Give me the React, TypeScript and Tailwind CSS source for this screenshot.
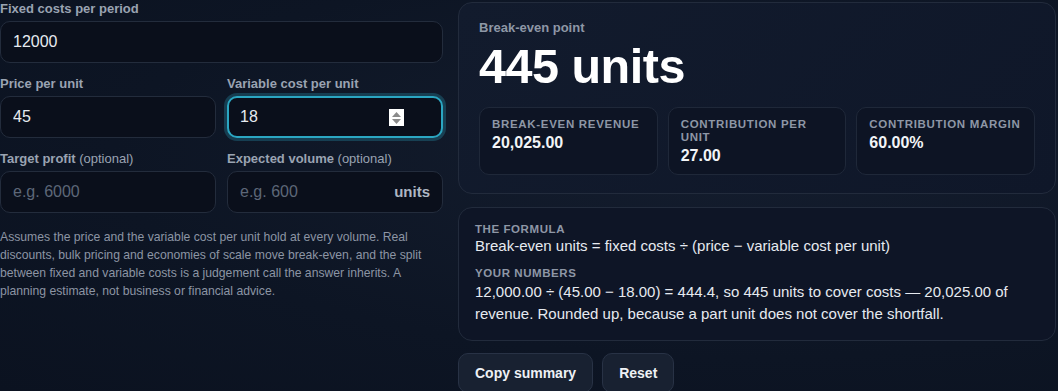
import React from "react";

const font = { fontFamily: '"Liberation Sans", Arial, sans-serif' };

function Field({
  label,
  optional,
  value,
  placeholder,
  suffix,
  focused,
}: {
  label: string;
  optional?: boolean;
  value?: string;
  placeholder?: string;
  suffix?: string;
  focused?: boolean;
}) {
  return (
    <label className="flex flex-col gap-[4px]">
      <span className="text-[13px] leading-[16px] font-bold text-[#9aa3b2]">
        {label}
        {optional && <span className="font-normal"> (optional)</span>}
      </span>
      <div
        className={
          focused
            ? "relative flex h-[42px] items-center rounded-[10px] border-2 border-[#2ba6c2] bg-[#0a0f1b] shadow-[0_0_0_3px_rgba(43,166,194,0.28)]"
            : "relative flex h-[42px] items-center rounded-[10px] border border-[#232c3c] bg-[#0a0f1b]"
        }
      >
        <input
          readOnly
          value={value ?? ""}
          placeholder={placeholder}
          className={
            focused
              ? "w-full bg-transparent pl-[11px] pr-3 text-[16px] text-[#e7ebf1] placeholder:text-[#5d6778] outline-none"
              : "w-full bg-transparent pl-3 pr-3 text-[16px] text-[#e7ebf1] placeholder:text-[#5d6778] outline-none"
          }
        />
        {focused && (
          <span className="absolute right-[37px] top-[11px] flex h-[17px] w-[15px] flex-col items-center justify-center gap-[2px] bg-white">
            <svg width="9" height="5" viewBox="0 0 9 5">
              <path d="M4.5 0L9 5H0z" fill="#8a8a8a" />
            </svg>
            <svg width="9" height="5" viewBox="0 0 9 5">
              <path d="M0 0h9L4.5 5z" fill="#8a8a8a" />
            </svg>
          </span>
        )}
        {suffix && (
          <span className="pr-3 text-[15px] font-bold text-[#aeb6c3]">{suffix}</span>
        )}
      </div>
    </label>
  );
}

function Stat({ label, value }: { label: string; value: string }) {
  return (
    <div className="rounded-[10px] border border-[#1f2839] bg-[#0d1424] px-3 pt-[10px] pb-3 h-[68px]">
      <div className="text-[11.5px] leading-[13px] tracking-[0.06em] uppercase font-bold text-[#8e97a6]">
        {label}
      </div>
      <div className="mt-[2px] text-[16px] leading-[20px] font-bold text-[#f2f4f7]">{value}</div>
    </div>
  );
}

export default function App() {
  return (
    <div
      className="min-h-[391px] w-[1058px] overflow-hidden bg-[radial-gradient(ellipse_at_70%_40%,#141d2e_0%,#0d1524_60%,#0b1220_100%)]"
      style={font}
    >
      <div className="grid grid-cols-[443px_598px] gap-[15px] pt-[2px]">
        {/* Inputs */}
        <div className="flex flex-col">
          <div className="-mt-[1px]">
            <Field label="Fixed costs per period" value="12000" />
          </div>
          <div className="mt-[13px] grid grid-cols-2 gap-[11px]">
            <Field label="Price per unit" value="45" />
            <Field label="Variable cost per unit" value="18" focused />
          </div>
          <div className="mt-[13px] grid grid-cols-2 gap-[11px]">
            <Field label="Target profit" optional placeholder="e.g. 6000" />
            <Field label="Expected volume" optional placeholder="e.g. 600" suffix="units" />
          </div>
          <p className="mt-[15px] text-[12.2px] leading-[18px] text-[#8c95a4]">
            Assumes the price and the variable cost per unit hold at every volume. Real discounts,
            bulk pricing and economies of scale move break-even, and the split between fixed and
            variable costs is a judgement call the answer inherits. A planning estimate, not
            business or financial advice.
          </p>
        </div>

        {/* Results */}
        <div className="flex flex-col">
          <div className="rounded-[14px] border border-[#222b3c] bg-[linear-gradient(135deg,#121b2d,#0f1729)] px-5 pt-[15px] pb-[18px]">
            <div className="text-[13px] leading-[20px] font-bold text-[#8e97a6]">Break-even point</div>
            <div className="mt-[2px] text-[48.5px] leading-[52px] font-bold text-white tracking-[-0.01em]">
              445 units
            </div>
            <div className="mt-[15px] grid grid-cols-3 gap-[10px]">
              <Stat label="Break-even revenue" value="20,025.00" />
              <Stat label="Contribution per unit" value="27.00" />
              <Stat label="Contribution margin" value="60.00%" />
            </div>
          </div>

          <div className="mt-[13px] rounded-[14px] border border-[#222b3c] bg-[#0e1526] px-4 pt-[14px] pb-[15px]">
            <div className="text-[11.5px] leading-[14px] tracking-[0.05em] font-bold uppercase text-[#8e97a6]">
              The formula
            </div>
            <div className="text-[15px] leading-[20px] text-[#e6eaf0]">
              Break-even units = fixed costs ÷ (price − variable cost per unit)
            </div>
            <div className="mt-[10px] text-[11.5px] leading-[14px] tracking-[0.05em] font-bold uppercase text-[#8e97a6]">
              Your numbers
            </div>
            <div className="mt-[1px] text-[15px] leading-[22px] text-[#e6eaf0]">
              12,000.00 ÷ (45.00 − 18.00) = 444.4, so 445 units to cover costs — 20,025.00 of
              revenue. Rounded up, because a part unit does not cover the shortfall.
            </div>
          </div>

          <div className="mt-[12px] flex gap-[9px]">
            <button className="h-[40px] rounded-[10px] border border-[#283245] bg-[#182131] px-4 text-[14px] font-bold text-[#eef1f5]">
              Copy summary
            </button>
            <button className="h-[40px] rounded-[10px] border border-[#283245] bg-[#182131] px-4 text-[14px] font-bold text-[#eef1f5]">
              Reset
            </button>
          </div>
        </div>
      </div>
    </div>
  );
}
